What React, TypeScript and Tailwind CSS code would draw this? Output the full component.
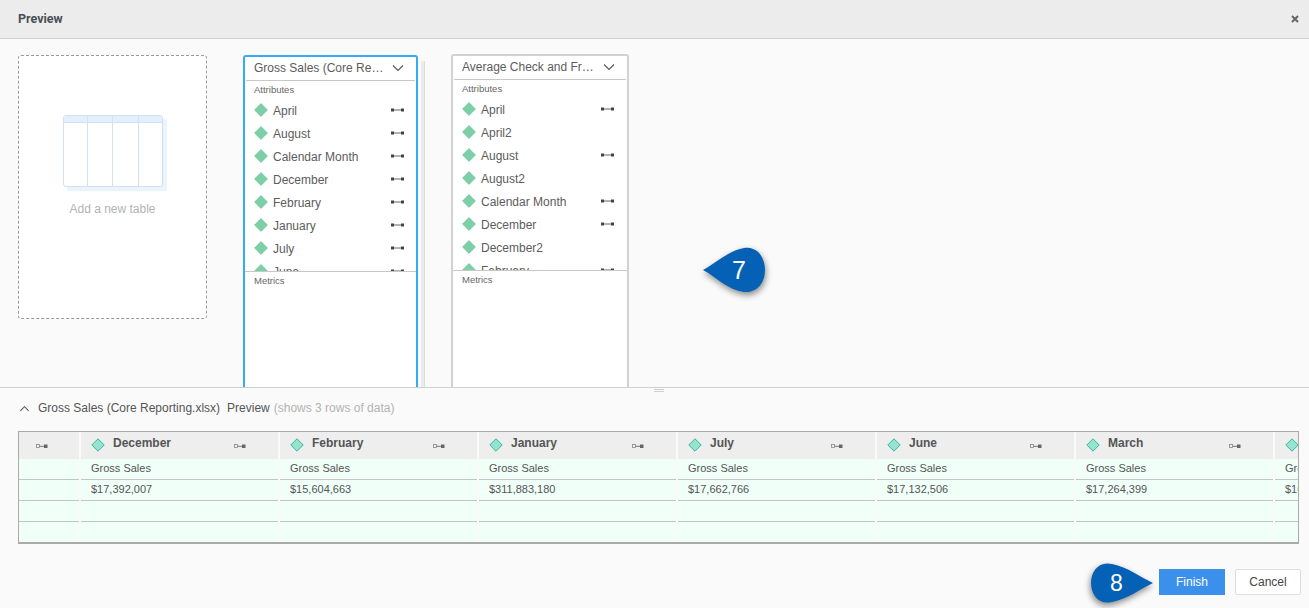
const font = { fontFamily: '"Liberation Sans", Arial, sans-serif' };

const card1Items = [
  { name: "April", link: true },
  { name: "August", link: true },
  { name: "Calendar Month", link: true },
  { name: "December", link: true },
  { name: "February", link: true },
  { name: "January", link: true },
  { name: "July", link: true },
  { name: "June", link: true },
];

const card2Items = [
  { name: "April", link: true },
  { name: "April2", link: false },
  { name: "August", link: true },
  { name: "August2", link: false },
  { name: "Calendar Month", link: true },
  { name: "December", link: true },
  { name: "December2", link: false },
  { name: "February", link: true },
];

const columns = [
  { name: "December", value: "$17,392,007" },
  { name: "February", value: "$15,604,663" },
  { name: "January", value: "$311,883,180" },
  { name: "July", value: "$17,662,766" },
  { name: "June", value: "$17,132,506" },
  { name: "March", value: "$17,264,399" },
  { name: "May", value: "$16,904,211" },
];

const Diamond = () => (
  <svg width="14" height="14" viewBox="0 0 14 14" className="-mt-[2px] shrink-0">
    <path d="M7 .6 13.4 7 7 13.4.6 7Z" fill="#7dcfa8" stroke="#6cc59b" strokeWidth="0.8" />
  </svg>
);

const LinkIcon = () => (
  <svg width="13" height="4" viewBox="0 0 13 4" className="-mt-[2px] shrink-0">
    <rect x="0" y="0.500" width="3" height="3" fill="#444" />
    <rect x="10" y="0.500" width="3" height="3" fill="#444" />
    <path d="M3 2h7" stroke="#666" strokeWidth="1" />
  </svg>
);

const SmallLink = () => (
  <svg width="12" height="5" viewBox="0 0 12 5" className="shrink-0">
    <rect x="0.500" y="0.500" width="3" height="3" fill="none" stroke="#888" strokeWidth="0.800" />
    <rect x="8" y="0.500" width="3.500" height="3.500" fill="#666" />
    <path d="M3.500 2.300H8" stroke="#777" strokeWidth="1" />
  </svg>
);

const Chevron = ({ up = false, size = 12 }: { up?: boolean; size?: number }) => (
  <svg width={size} height={size} viewBox="0 0 12 12" className="shrink-0">
    <path d={up ? "M1.500 8.500 6 4l4.500 4.500" : "M1 3.500 6 8.500l5-5"} fill="none" stroke="#555" strokeWidth="1.100" />
  </svg>
);

const Balloon7 = () => (
  <div className="absolute left-[702px] top-[246px]">
    <svg width="70" height="54" viewBox="0 0 70 54" className="drop-shadow-[1px_3px_3px_rgba(0,0,0,0.45)]">
      <path d="M1 24 C14 17 26 5 42 2 C55 0 63 11 63 24 C63 37 55 47 42 46 C26 44 14 31 1 24Z" fill="#0561b5" />
    </svg>
    <span className="absolute left-[30px] top-[7px] text-[25px] leading-[34px] text-white">7</span>
  </div>
);

const Balloon8 = () => (
  <div className="absolute left-[1088px] top-[561px]">
    <svg width="70" height="48" viewBox="0 0 70 48" className="drop-shadow-[-1px_3px_3px_rgba(0,0,0,0.45)]">
      <path d="M65 22 C52 16 40 6 24 3 C11 0 3 10 3 22 C3 34 11 44 24 41 C40 38 52 28 65 22Z" fill="#0561b5" />
    </svg>
    <span className="absolute left-[22px] top-[5px] text-[23px] leading-[34px] text-white">8</span>
  </div>
);

const TableCard = ({
  title,
  items,
  className,
  rowClass,
}: {
  title: string;
  items: { name: string; link: boolean }[];
  className: string;
  rowClass: string;
}) => (
  <div className={`flex h-[340px] shrink-0 flex-col rounded-t-[3px] border-2 border-b-0 bg-white ${className}`}>
    <div className="mx-px flex h-[24px] shrink-0 items-center justify-between border-b border-[#c8c8c8] pb-[2px] pl-[8px] pr-[11px] text-[12px] text-[#5c5c5c]">
      <span className="w-[132px] truncate">{title}</span>
      <Chevron />
    </div>
    <div className="h-[191px] shrink-0 overflow-hidden border-b border-[#c8c8c8]">
      <div className="pl-[9px] pt-[3px] text-[9.500px] leading-[12px] text-[#666]">Attributes</div>
      <div className={`flex flex-col pl-[9px] pt-[3px] ${rowClass}`}>
        {items.map((item) => (
          <div key={item.name} className="flex h-[23px] shrink-0 items-center text-[12px] text-[#5c5c5c]">
            <Diamond />
            <span className="ml-[5px] flex-1">{item.name}</span>
            {item.link && <LinkIcon />}
          </div>
        ))}
      </div>
    </div>
    <div className="pl-[9px] pt-[3px] text-[9.500px] leading-[12px] text-[#666]">Metrics</div>
  </div>
);

const DataColumn = ({ name, value }: { name: string; value: string }) => (
  <div className="flex w-[199px] shrink-0 flex-col border-r-2 border-[#fafafa]">
    <div className="relative flex h-[27px] shrink-0 items-start bg-[#eeeeee] pl-[10px] pt-[5px]">
      <svg width="14" height="14" viewBox="0 0 14 14" className="mt-[1px] shrink-0">
        <path d="M7 .8 13.200 7 7 13.200.8 7Z" fill="#96e3d0" stroke="#35b89c" strokeWidth="1" />
      </svg>
      <span className="ml-[8px] text-[12px] font-bold leading-[12px] text-[#555]">{name}</span>
      <div className="absolute right-[32px] top-[12px]">
        <SmallLink />
      </div>
    </div>
    <div className="flex h-[21px] shrink-0 items-center border-b border-[#c4c4c4] bg-[#f0fff8] pb-[2px] pl-[10px] text-[11px] text-[#555]">
      Gross Sales
    </div>
    <div className="flex h-[21px] shrink-0 items-center border-b border-[#c4c4c4] bg-[#f0fff8] pb-[2px] pl-[10px] text-[11px] text-[#555]">
      {value}
    </div>
    <div className="h-[21px] shrink-0 border-b border-[#c4c4c4] bg-[#f0fff8]" />
    <div className="h-[20px] shrink-0 bg-[#f0fff8]" />
  </div>
);

export default function App() {
  return (
    <div className="relative flex h-[608px] w-full flex-col overflow-hidden bg-[#fafafa]" style={font}>
      <header className="flex h-[39px] shrink-0 items-center justify-between border-b border-[#cfcfcf] bg-[#ececec] pl-[18px] pr-[10px]">
        <span className="text-[12.500px] font-bold text-[#4a4f57]" style={{ fontFamily: "Roboto, sans-serif" }}>
          Preview
        </span>
        <svg width="8" height="8" viewBox="0 0 8 8">
          <path d="M1 1l6 6M7 1 1 7" stroke="#666" strokeWidth="2" />
        </svg>
      </header>

      <div className="flex h-[348px] shrink-0 items-start overflow-hidden pl-[18px]">
        <div className="mt-[16px] flex h-[264px] w-[189px] shrink-0 flex-col items-center rounded-[3px] border border-dashed border-[#9a9a9a] bg-white pt-[59px]">
          <div className="relative h-[72px] w-[100px]">
            <div className="absolute left-[4px] top-[4px] h-[72px] w-[100px] rounded-[2px] bg-[#ebf3fd]" />
            <div className="relative flex h-[72px] w-[100px] overflow-hidden rounded-[3px] border border-[#cfe1f8] bg-white">
              {[24, 25, 26, 23].map((w, i) => (
                <div key={i} className="border-r border-[#cfe1f8] last:border-r-0" style={{ width: w }}>
                  <div className="h-[7px] border-b border-[#cfe1f8] bg-[#e3effd]" />
                </div>
              ))}
            </div>
          </div>
          <span className="mt-[13px] text-[12px] text-[#b3b3b3]">Add a new table</span>
        </div>

        <div className="relative ml-[36px] mt-[16px] shrink-0">
          <div className="absolute left-[178px] top-[6px] h-[340px] w-[4px] border-r border-[#dddddd] bg-[#ececec]" />
          <TableCard
            title="Gross Sales (Core Reporting.xlsx)"
            items={card1Items}
            className="w-[175px] border-[#38aaf0]"
            rowClass="pr-[12px]"
          />
        </div>

        <div className="ml-[33px] mt-[15px] shrink-0">
          <TableCard
            title="Average Check and Frequency"
            items={card2Items}
            className="w-[178px] border-[#d2d2d2]"
            rowClass="pr-[13px]"
          />
        </div>
      </div>

      <div className="relative h-[1px] shrink-0 bg-[#cfcfcf]">
        <div className="absolute left-[654px] top-[2px] h-[3px] w-[10px] border-y border-[#cfcfcf]" />
      </div>

      <div className="flex h-[36px] shrink-0 items-center pl-[19px] pt-[4px] text-[12px] text-[#555]">
        <Chevron up size={11} />
        <span className="ml-[8px]">Gross Sales (Core Reporting.xlsx)</span>
        <span className="ml-[7px]">Preview</span>
        <span className="ml-[4px] text-[#b3b3b3]">(shows 3 rows of data)</span>
      </div>

      <div className="ml-[18px] mt-[7px] flex w-[1281px] shrink-0 overflow-hidden border border-b-2 border-[#aaaaaa]">
        <div className="flex w-[62px] shrink-0 flex-col border-r-2 border-[#fafafa]">
          <div className="flex h-[27px] shrink-0 items-center bg-[#eeeeee] pl-[17px] pt-[2px]">
            <SmallLink />
          </div>
          <div className="h-[21px] shrink-0 border-b border-[#c4c4c4] bg-[#f0fff8]" />
          <div className="h-[21px] shrink-0 border-b border-[#c4c4c4] bg-[#f0fff8]" />
          <div className="h-[21px] shrink-0 border-b border-[#c4c4c4] bg-[#f0fff8]" />
          <div className="h-[20px] shrink-0 bg-[#f0fff8]" />
        </div>
        {columns.map((c) => (
          <DataColumn key={c.name} name={c.name} value={c.value} />
        ))}
      </div>

      <div className="mt-[25px] flex justify-end gap-[10px] pr-[8px]">
        <button className="h-[26px] w-[66px] bg-[#3b90ec] text-[12px] text-white">Finish</button>
        <button className="h-[26px] w-[66px] rounded-[2px] border border-[#dddddd] bg-white text-[12px] text-[#444]">
          Cancel
        </button>
      </div>

      <Balloon7 />
      <Balloon8 />
    </div>
  );
}
